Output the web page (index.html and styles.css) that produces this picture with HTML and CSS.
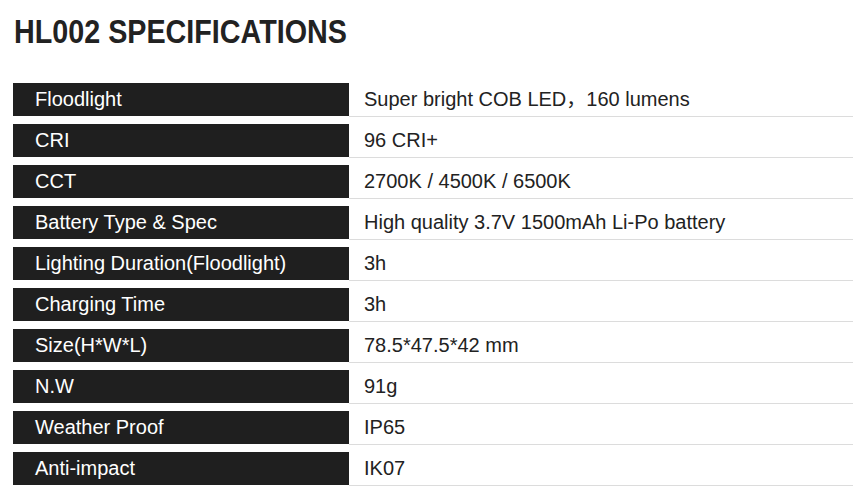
FILE: index.html
```html
<!DOCTYPE html>
<html>
<head>
<meta charset="utf-8">
<link rel="stylesheet" href="styles.css">
</head>
<body>
<h1 class="title"><span class="title-text">HL002 SPECIFICATIONS</span></h1>
<div class="specs">
  <div class="row"><div class="key">Floodlight</div><div class="val">Super bright COB LED，160 lumens</div></div>
  <div class="row"><div class="key">CRI</div><div class="val">96 CRI+</div></div>
  <div class="row"><div class="key">CCT</div><div class="val">2700K / 4500K / 6500K</div></div>
  <div class="row"><div class="key">Battery Type &amp; Spec</div><div class="val">High quality 3.7V 1500mAh Li-Po battery</div></div>
  <div class="row"><div class="key">Lighting Duration(Floodlight)</div><div class="val">3h</div></div>
  <div class="row"><div class="key">Charging Time</div><div class="val">3h</div></div>
  <div class="row"><div class="key">Size(H*W*L)</div><div class="val">78.5*47.5*42 mm</div></div>
  <div class="row"><div class="key">N.W</div><div class="val">91g</div></div>
  <div class="row"><div class="key">Weather Proof</div><div class="val">IP65</div></div>
  <div class="row"><div class="key">Anti-impact</div><div class="val">IK07</div></div>
</div>
</body>
</html>
```
FILE: styles.css
```css
html, body {
  margin: 0;
  padding: 0;
  background: #fff;
}
body {
  padding: 0 7px 0 13px;
  font-family: "Liberation Sans", Arial, "Noto Sans CJK SC", sans-serif;
}
.title {
  margin: 0;
  padding-top: 12px;
  height: 83px;
  box-sizing: border-box;
  font-family: "Liberation Sans", Arial, sans-serif;
  font-weight: 700;
  font-size: 33px;
  line-height: 40px;
  color: #222;
  white-space: nowrap;
}
.title-text {
  display: inline-block;
  transform: scaleX(0.87);
  transform-origin: 0 50%;
  margin-left: 1px;
}
.specs {
  display: flex;
  flex-direction: column;
  gap: 7px;
}
.row {
  display: grid;
  grid-template-columns: 336px 1fr;
  align-items: start;
}
.key {
  height: 33px;
  background: #1f1f1f;
  color: #fff;
  font-size: 20px;
  line-height: 33px;
  padding-left: 22px;
  white-space: nowrap;
}
.val {
  height: 33px;
  border-bottom: 1px solid #dcdcdc;
  color: #222;
  font-size: 20px;
  line-height: 33px;
  padding-left: 15px;
  white-space: nowrap;
}
```
